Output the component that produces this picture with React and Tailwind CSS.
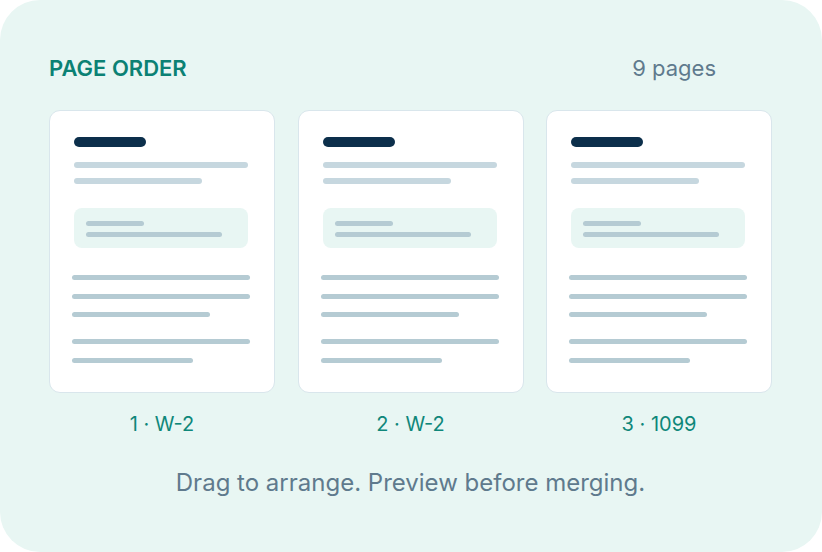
const pages = [
  { id: 1, label: '1 · W-2' },
  { id: 2, label: '2 · W-2' },
  { id: 3, label: '3 · 1099' },
]

function PageThumb() {
  return (
    <div className="flex h-[283px] w-[226px] flex-col rounded-[11px] border border-[#d9e6ec] bg-white px-[22px] pt-[26px]">
      <div className="flex flex-col px-[2px]">
        <div className="h-[10px] w-[72px] rounded-full bg-[#0c2f4b]" />
        <div className="mt-[15px] h-[6px] w-[174px] rounded-full bg-[#c6d7df]" />
        <div className="mt-[10px] h-[6px] w-[128px] rounded-full bg-[#c6d7df]" />
        <div className="mt-[24px] flex h-[40px] w-[174px] flex-col rounded-[8px] bg-[#e8f6f3] px-[12px] pt-[13px]">
          <div className="h-[5px] w-[58px] rounded-full bg-[#b5cbd3]" />
          <div className="mt-[6px] h-[5px] w-[136px] rounded-full bg-[#b5cbd3]" />
        </div>
      </div>
      <div className="mt-[27px] h-[5px] w-[178px] rounded-full bg-[#b5cbd3]" />
      <div className="mt-[14px] h-[5px] w-[178px] rounded-full bg-[#b5cbd3]" />
      <div className="mt-[13px] h-[5px] w-[138px] rounded-full bg-[#b5cbd3]" />
      <div className="mt-[22px] h-[5px] w-[178px] rounded-full bg-[#b5cbd3]" />
      <div className="mt-[14px] h-[5px] w-[121px] rounded-full bg-[#b5cbd3]" />
    </div>
  )
}

export default function App() {
  return (
    <div className="h-[552px] w-[822px] bg-white font-['Inter',sans-serif]">
      <div className="flex h-[552px] w-[822px] flex-col rounded-[40px] bg-[#e8f6f3] pl-[49px] pr-[50px] pt-[54px]">
        <div className="flex h-[28px] items-center justify-between">
          <span className="text-[22px] font-semibold leading-none text-[#0b8174]">PAGE ORDER</span>
          <span className="mr-[56px] text-[22px] leading-none text-[#5f7a8d]">9 pages</span>
        </div>

        <div className="mt-[28px] flex gap-[22.5px]">
          {pages.map((page) => (
            <div key={page.id} className="flex flex-col items-center">
              <PageThumb />
              <span className="mt-[19px] h-[24px] text-[20px] leading-[24px] text-[#0f877a]">
                {page.label}
              </span>
            </div>
          ))}
        </div>

        <p className="mt-[33px] h-[28px] text-center text-[24px] leading-[28px] text-[#5f7a8d]">
          Drag to arrange. Preview before merging.
        </p>
      </div>
    </div>
  )
}
